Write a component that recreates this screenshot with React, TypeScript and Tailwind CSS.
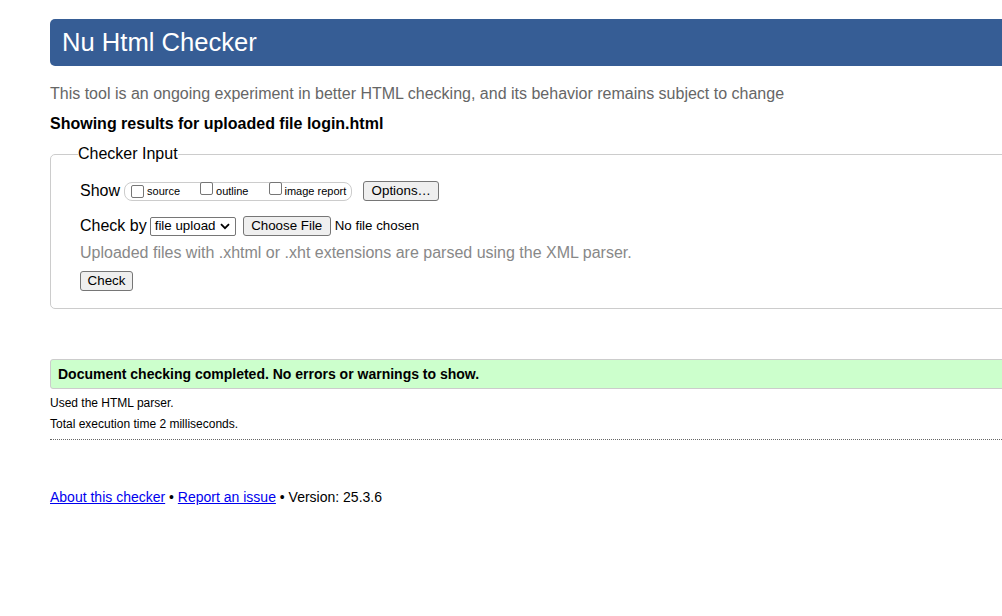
import React from "react";

function Box() {
  return (
    <span className="inline-block w-[13px] h-[13px] border border-[#767676] rounded-[2px] bg-white shrink-0" />
  );
}

function Btn({ children, className = "" }: { children: React.ReactNode; className?: string }) {
  return (
    <span
      className={
        "inline-flex items-center justify-center h-[20px] px-[7px] border border-[#767676] rounded-[3px] bg-[#efefef] text-[13.33px] leading-none text-black " +
        className
      }
    >
      {children}
    </span>
  );
}

export default function App() {
  return (
    <div
      className="w-full min-h-[616px] bg-white overflow-hidden text-black"
      style={{ fontFamily: '"Liberation Sans", Arial, sans-serif' }}
    >
      <div className="ml-[50px] w-[1000px]">
        <div className="mt-[19px] h-[47px] bg-[#365d95] rounded-[5px] flex items-center pl-[12px]">
          <h1 className="text-white text-[25.6px] leading-none font-normal">Nu Html Checker</h1>
        </div>

        <p className="mt-[19px] text-[16px] leading-[18px] text-[#666]">
          This tool is an ongoing experiment in better HTML checking, and its behavior remains subject to change
        </p>
        <p className="mt-[12px] text-[16px] leading-[18px] font-bold">
          Showing results for uploaded file login.html
        </p>

        <fieldset className="mt-[12px] border border-[#ccc] rounded-[5px] pl-[29px] pr-[20px] pb-[17px]">
          <legend className="ml-[-2px] text-[16px] leading-[18px]">Checker Input</legend>

          <div className="mt-[18px] h-[20px] flex items-center text-[16px]">
            <span>Show</span>
            <span className="ml-[4px] h-[19px] flex items-center border border-[#ccc] rounded-[8px] pl-[6px] pr-[5px] text-[11px]">
              <Box />
              <span className="ml-[3px]">source</span>
              <span className="ml-[20px]">
                <Box />
              </span>
              <span className="ml-[3px]">outline</span>
              <span className="ml-[21px]">
                <Box />
              </span>
              <span className="ml-[2px]">image report</span>
            </span>
            <Btn className="ml-[11px] w-[76px]">Options…</Btn>
          </div>

          <div className="mt-[15px] h-[20px] flex items-center text-[16px]">
            <span>Check by</span>
            <span className="ml-[3px] w-[86px] h-[19px] flex items-center justify-between border border-[#767676] rounded-[2px] bg-white pl-[4px] pr-[5px] text-[13.33px] leading-none">
              <span>file upload</span>
              <svg width="10" height="7" viewBox="0 0 10 7" fill="none">
                <path d="M1 1.2 L5 5.2 L9 1.2" stroke="#000" strokeWidth="1.8" />
              </svg>
            </span>
            <Btn className="ml-[7px] w-[88px]">Choose File</Btn>
            <span className="ml-[4px] text-[13.33px]">No file chosen</span>
          </div>

          <p className="mt-[8px] text-[16px] leading-[18px] text-[#888]">
            Uploaded files with .xhtml or .xht extensions are parsed using the XML parser.
          </p>

          <div className="mt-[9px] flex">
            <Btn className="w-[53px]">Check</Btn>
          </div>
        </fieldset>

        <div className="mt-[50px] h-[30px] flex items-center bg-[#ccffcc] border border-[#ccc] rounded-[3px] pl-[7px]">
          <span className="text-[14px] font-bold">Document checking completed. No errors or warnings to show.</span>
        </div>

        <p className="mt-[7px] text-[12px] leading-[14px]">Used the HTML parser.</p>
        <p className="mt-[7px] text-[12px] leading-[14px]">Total execution time 2 milliseconds.</p>
        <div className="mt-[8px] border-t border-dotted border-[#666]" />

        <p className="mt-[49px] text-[14px] leading-[16px]">
          <a className="text-[#0000ee] underline">About this checker</a>
          {" • "}
          <a className="text-[#0000ee] underline">Report an issue</a>
          {" • Version: 25.3.6"}
        </p>
      </div>
    </div>
  );
}
